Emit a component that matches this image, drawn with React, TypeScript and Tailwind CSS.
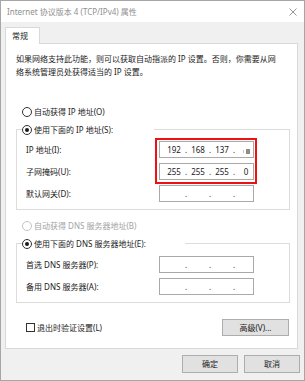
import type { ReactNode } from "react";

type IpFieldProps = {
  values?: string[];
  masked?: boolean;
};

const IpField = ({ values, masked = false }: IpFieldProps) => {
  const parts = values ?? ["", "", "", ""];
  return (
    <div className="flex items-center w-[95px] h-[17px] pl-[5px] bg-white border border-[#a9a9a9] text-[8px] leading-none text-[#1a1a1a]">
      {parts.map((p, i) => (
        <div key={i} className="flex items-center">
          <span className="w-[18px] text-center">
            {masked && i === 3 ? (
              <span className="inline-flex items-center gap-[2px]">
                <span className="inline-block w-px h-[3px] bg-[#c8c8c8]" />
                <span className="inline-block w-[4px] h-[5px] bg-[#8c8c8c]" />
              </span>
            ) : (
              p
            )}
          </span>
          {i < 3 && <span className="w-[6px] text-center">.</span>}
        </div>
      ))}
    </div>
  );
};

const Radio = ({ checked = false, disabled = false }: { checked?: boolean; disabled?: boolean }) => (
  <span
    className={
      "flex items-center justify-center w-[10px] h-[10px] rounded-full border bg-white " +
      (disabled ? "border-[#c4c4c4]" : "border-[#333333]")
    }
  >
    {checked && <span className="w-[4px] h-[4px] rounded-full bg-[#1a1a1a]" />}
  </span>
);

const FieldRow = ({ label, children }: { label: string; children: ReactNode }) => (
  <div className="flex items-center h-[17px]">
    <span className="w-[137px] pl-[4px] text-[8px] leading-none">{label}</span>
    {children}
  </div>
);

const GroupBox = ({
  label,
  legendWidth,
  children,
}: {
  label: string;
  legendWidth: string;
  children: ReactNode;
}) => (
  <fieldset className="ml-[10px] mr-[7px] border border-[#dcdcdc] pl-[5px] pr-0">
    <legend className={"flex items-center gap-[2px] h-[17px] bg-white " + legendWidth}>
      <Radio checked />
      <span className="text-[8px] leading-none">{label}</span>
    </legend>
    {children}
  </fieldset>
);

export default function App() {
  return (
    <div className="w-[305px] h-[381px] flex flex-col bg-[#f0f0f0] border border-[#a6a6a6] text-[#1a1a1a] font-['Noto_Sans','Noto_Sans_CJK_SC',sans-serif] overflow-hidden">
      {/* title bar */}
      <div className="flex items-center justify-between h-[21px] bg-white pl-[6px] pr-[6px]">
        <span className="text-[8px] leading-none text-[#8f8f8f]">Internet 协议版本 4 (TCP/IPv4) 属性</span>
        <svg width="8" height="8" viewBox="0 0 8 8" className="mr-[1px]">
          <path d="M0.5 0.5 L7.5 7.5 M7.5 0.5 L0.5 7.5" stroke="#7a7a7a" strokeWidth="0.8" fill="none" />
        </svg>
      </div>

      {/* tab strip */}
      <div className="flex ml-[4px] mt-[5px]">
        <div className="relative z-10 -mb-px flex items-center h-[17px] w-[35px] pl-[6px] bg-white border border-b-0 border-[#d9d9d9] text-[8px] leading-none">
          常规
        </div>
      </div>

      {/* tab panel */}
      <div className="ml-[4px] mr-[6px] h-[306px] flex flex-col bg-white border border-[#d9d9d9]">
        <p className="pt-[8px] pl-[10px] text-[8px] leading-[13px]">
          如果网络支持此功能，则可以获取自动指派的 IP 设置。否则，你需要从网
          <br />
          络系统管理员处获得适当的 IP 设置。
        </p>

        <div className="flex items-center gap-[2px] h-[17px] mt-[25px] ml-[16px]">
          <Radio />
          <span className="text-[8px] leading-none">自动获得 IP 地址(O)</span>
        </div>

        <div className="mt-[1px]">
          <GroupBox label="使用下面的 IP 地址(S):" legendWidth="w-[132px]">
            <div className="relative flex flex-col gap-[5px] pt-[3px] pb-[7px]">
              <FieldRow label="IP 地址(I):">
                <IpField values={["192", "168", "137", ""]} masked />
              </FieldRow>
              <FieldRow label="子网掩码(U):">
                <IpField values={["255", "255", "255", "0"]} />
              </FieldRow>
              <FieldRow label="默认网关(D):">
                <IpField />
              </FieldRow>
              <div className="absolute left-[133px] top-0 w-[102px] h-[46px] border-2 border-[#ee1111]" />
            </div>
          </GroupBox>
        </div>

        <div className="flex items-center gap-[2px] h-[17px] mt-[7px] ml-[16px]">
          <Radio disabled />
          <span className="text-[8px] leading-none text-[#a3a3a3]">自动获得 DNS 服务器地址(B)</span>
        </div>

        <div className="mt-[1px]">
          <GroupBox label="使用下面的 DNS 服务器地址(E):" legendWidth="w-[163px]">
            <div className="flex flex-col gap-[5px] pt-[4px] pb-[7px]">
              <FieldRow label="首选 DNS 服务器(P):">
                <IpField />
              </FieldRow>
              <FieldRow label="备用 DNS 服务器(A):">
                <IpField />
              </FieldRow>
            </div>
          </GroupBox>
        </div>

        <div className="flex items-center justify-between mt-[16px] ml-[20px] mr-[8px]">
          <div className="flex items-center gap-[2px]">
            <span className="w-[9px] h-[9px] border border-[#333333] bg-white" />
            <span className="text-[8px] leading-none">退出时验证设置(L)</span>
          </div>
          <button className="w-[67px] h-[17px] bg-[#e1e1e1] border border-[#adadad] text-[8px] leading-none">
            高级(V)...
          </button>
        </div>
      </div>

      {/* dialog buttons */}
      <div className="flex justify-end gap-[6px] mt-[6px] mr-[4px]">
        <button className="w-[56px] h-[18px] bg-[#e1e1e1] border border-[#adadad] text-[8px] leading-none">确定</button>
        <button className="w-[56px] h-[18px] bg-[#e1e1e1] border border-[#adadad] text-[8px] leading-none">取消</button>
      </div>
    </div>
  );
}
